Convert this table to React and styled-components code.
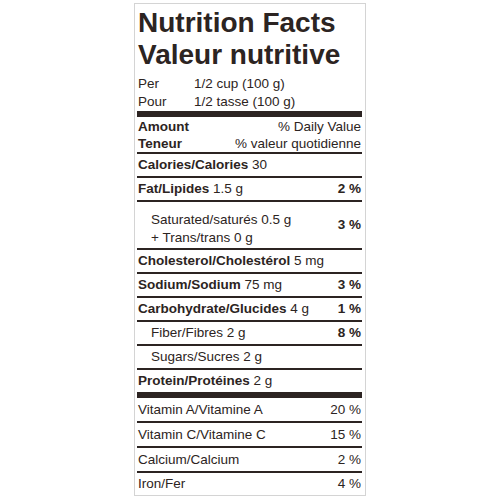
import styled, { createGlobalStyle } from 'styled-components'

const ink = '#2c2422'

const GlobalStyle = createGlobalStyle`
  html, body {
    margin: 0;
    padding: 0;
    background: #ffffff;
  }
  body {
    width: 500px;
    height: 500px;
    overflow: hidden;
  }
`

const Page = styled.main`
  display: flex;
  justify-content: center;
  padding-top: 3px;
`

const Label = styled.section`
  box-sizing: border-box;
  width: 232px;
  height: 493px;
  padding: 3px 3px 0 2px;
  border: 1px solid #d4d4d4;
  display: flex;
  flex-direction: column;
  color: ${ink};
  font-family: "Liberation Sans", Arial, sans-serif;
  font-size: 13.5px;
`

const Title = styled.h1`
  margin: 0 0 0 1px;
  font-weight: 700;
  font-size: 28px;
  line-height: 32px;
  span {
    display: block;
  }
`

const Serving = styled.div`
  display: grid;
  grid-template-columns: 56px 1fr;
  margin-top: 4px;
  padding-left: 1px;
  line-height: 18px;
`

const Bar = styled.div`
  height: 6px;
  background: ${ink};
`

const Head = styled.div`
  display: grid;
  grid-template-columns: auto 1fr;
  padding: 1px 1px 0;
  line-height: 17px;
  span:nth-child(even) {
    text-align: right;
  }
`

const Row = styled.div`
  display: flex;
  align-items: center;
  justify-content: space-between;
  height: ${({ $h }) => $h || 22}px;
  flex: ${({ $fill }) => ($fill ? 1 : 'none')};
  padding: 0 1px 0 ${({ $indent }) => ($indent ? 14 : 1)}px;
  border-top: ${({ $plain }) => ($plain ? 'none' : `2px solid ${ink}`)};
  line-height: 20px;
  white-space: nowrap;
`

const Stack = styled.div`
  display: flex;
  flex-direction: column;
  line-height: 18px;
  padding-top: 8px;
`

const B = styled.b`
  font-weight: 700;
`

const Pct = styled.span`
  font-weight: ${({ $bold }) => ($bold ? 700 : 400)};
  white-space: pre;
`

const vitamins = [
  ['Vitamin A/Vitamine A', '20 %'],
  ['Vitamin C/Vitamine C', '15 %'],
  ['Calcium/Calcium', '2 %'],
  ['Iron/Fer', '4 %'],
]

export default function App() {
  return (
    <>
      <GlobalStyle />
      <Page>
        <Label>
          <Title>
            <span>Nutrition Facts</span>
            <span>Valeur nutritive</span>
          </Title>
          <Serving>
            <span>Per</span>
            <span>1/2 cup (100 g)</span>
            <span>Pour</span>
            <span>1/2 tasse (100 g)</span>
          </Serving>
          <Bar />
          <Head>
            <B>Amount</B>
            <span>% Daily Value</span>
            <B>Teneur</B>
            <span>% valeur quotidienne</span>
          </Head>
          <Row>
            <span><B>Calories/Calories</B> 30</span>
          </Row>
          <Row>
            <span><B>Fat/Lipides</B> 1.5 g</span>
            <Pct $bold>2 %</Pct>
          </Row>
          <Row $h={46} $indent>
            <Stack>
              <span>Saturated/saturés 0.5 g</span>
              <span>+ Trans/trans 0 g</span>
            </Stack>
            <Pct $bold>3 %</Pct>
          </Row>
          <Row>
            <span><B>Cholesterol/Cholestérol</B> 5 mg</span>
          </Row>
          <Row>
            <span><B>Sodium/Sodium</B> 75 mg</span>
            <Pct $bold>3 %</Pct>
          </Row>
          <Row>
            <span><B>Carbohydrate/Glucides</B> 4 g</span>
            <Pct $bold>1 %</Pct>
          </Row>
          <Row $indent>
            <span>Fiber/Fibres 2 g</span>
            <Pct $bold>8 %</Pct>
          </Row>
          <Row $indent>
            <span>Sugars/Sucres 2 g</span>
          </Row>
          <Row>
            <span><B>Protein/Protéines</B> 2 g</span>
          </Row>
          <Bar />
          {vitamins.map(([name, dv], i) => (
            <Row key={name} $h={23} $plain={i === 0} $fill={i === vitamins.length - 1}>
              <span>{name}</span>
              <Pct>{dv}</Pct>
            </Row>
          ))}
        </Label>
      </Page>
    </>
  )
}
